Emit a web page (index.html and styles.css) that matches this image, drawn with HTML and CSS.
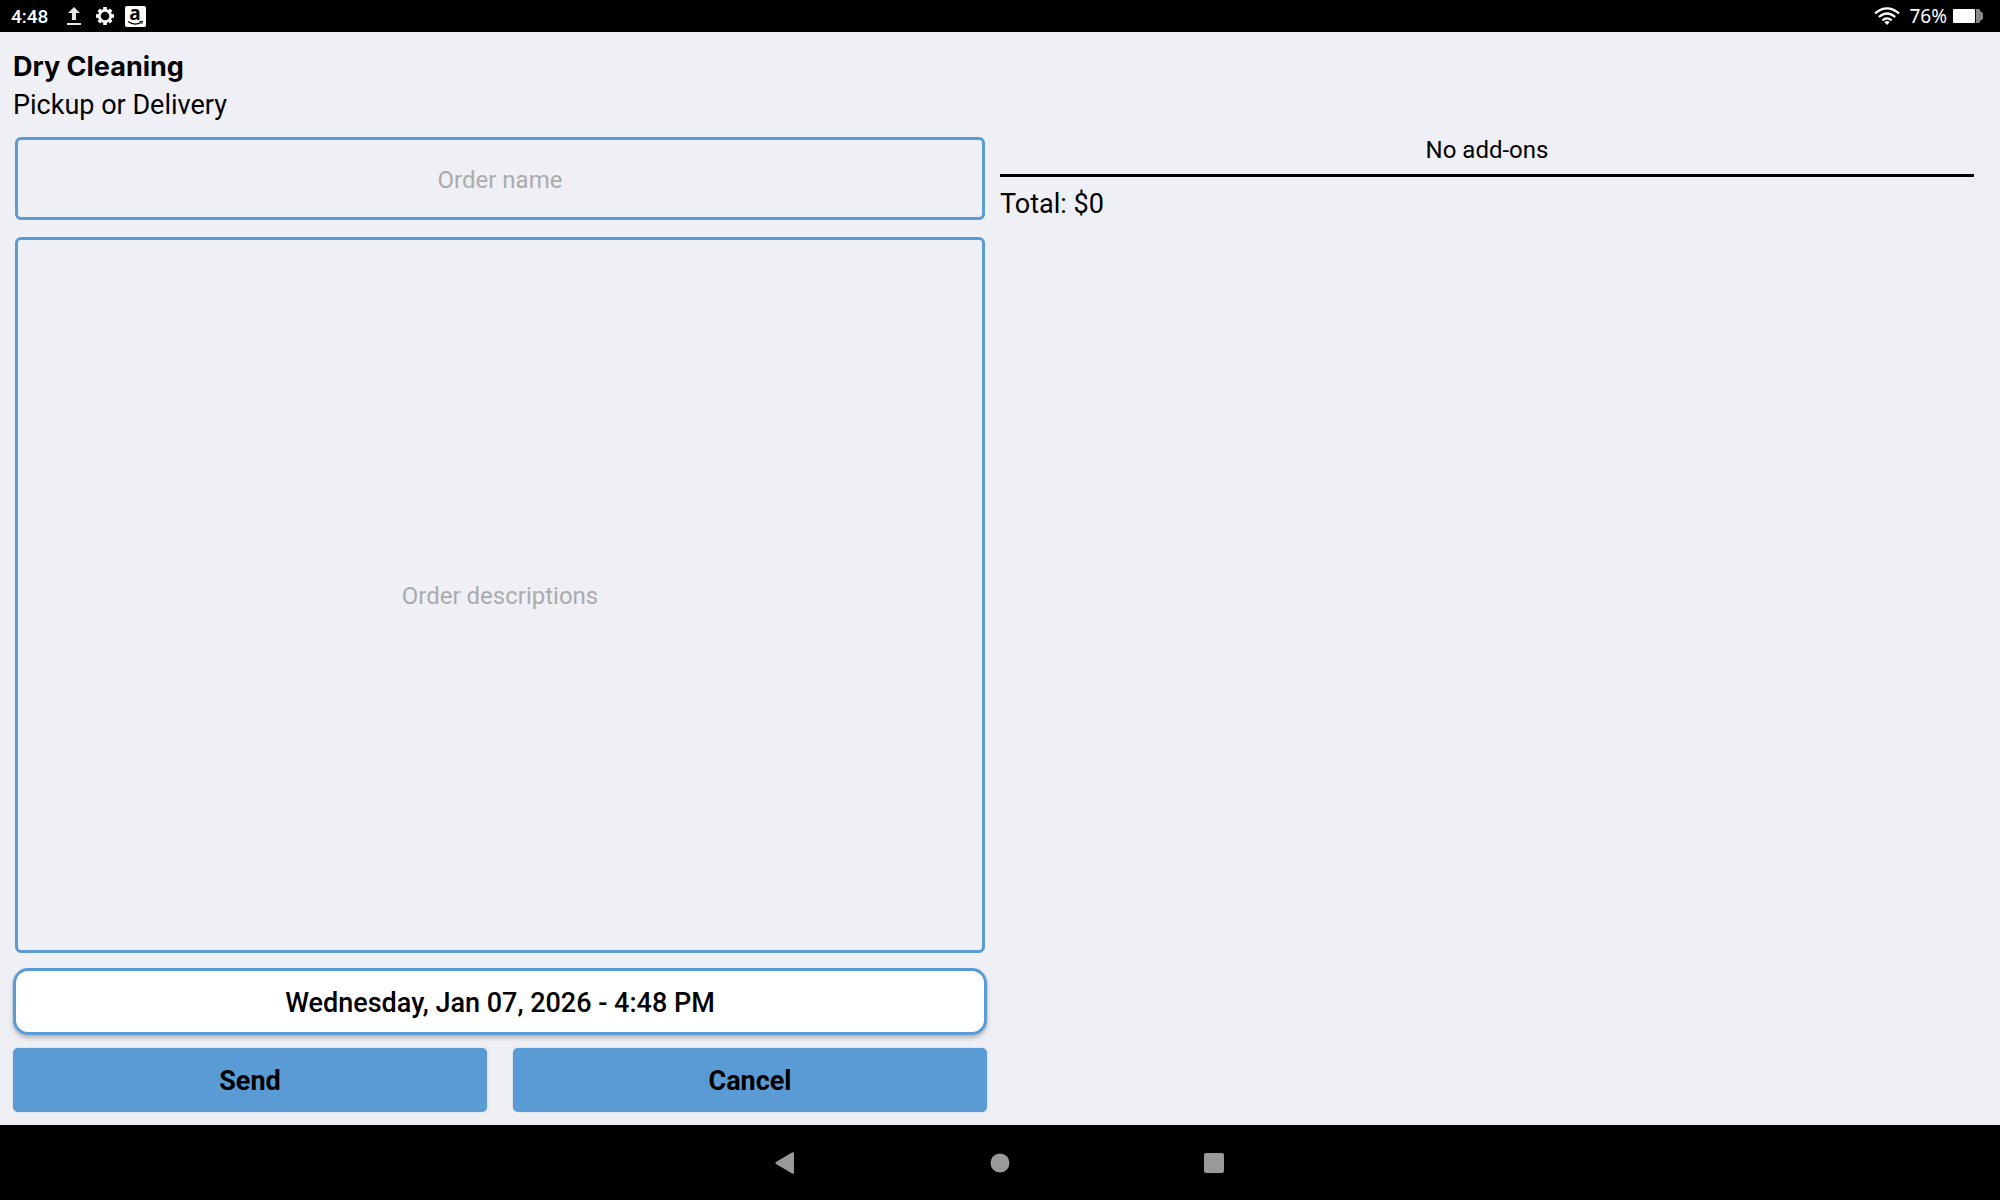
FILE: index.html
```html
<!DOCTYPE html>
<html lang="en">
<head>
    <meta charset="UTF-8">
    <meta name="viewport" content="width=device-width, initial-scale=1.0">
    <title>Dry Cleaning</title>
    <link rel="stylesheet" href="styles.css">
</head>
<body>
    <div class="status-bar">
        <span class="clock">4:48</span>
        <svg class="icon-upload" width="16" height="20" viewBox="0 0 16 20">
            <path d="M8 1L14 7H10V14H6V7H2Z" fill="#e6e6e6"/>
            <rect x="1" y="17" width="14" height="2" fill="#e6e6e6"/>
        </svg>
        <svg class="icon-gear" width="18" height="18" viewBox="0 0 18 18">
            <circle cx="9" cy="9" r="5.7" fill="none" stroke="#fff" stroke-width="2.8"/>
            <g stroke="#fff" stroke-width="3.6">
                <path d="M9 0V3M9 15V18M0 9H3M15 9H18"/>
                <path d="M2.8 2.8L4.6 4.6M13.4 13.4L15.2 15.2M2.8 15.2L4.6 13.4M13.4 4.6L15.2 2.8"/>
            </g>
        </svg>
        <svg class="icon-store" width="21" height="21" viewBox="0 0 21 21">
            <rect width="21" height="21" rx="2" fill="#fff"/>
            <text x="10" y="14" text-anchor="middle" class="store-letter">a</text>
            <path d="M3 15.5Q9.5 20 16 16.5" fill="none" stroke="#000" stroke-width="1.2"/>
            <path d="M14.5 15.5L17.5 15.3L16.7 18" fill="none" stroke="#000" stroke-width="1"/>
        </svg>
        <svg class="icon-wifi" width="26" height="18" viewBox="0 0 26 18">
            <g fill="none" stroke="#fff" stroke-width="2.2">
                <path d="M1 6.3Q13 -3.7 25 6.3"/>
                <path d="M4.8 10Q13 3 21.2 10"/>
                <path d="M8.4 13.3Q13 9.3 17.6 13.3"/>
            </g>
            <path d="M10.3 15Q13 12.8 15.7 15L13 18Z" fill="#fff"/>
        </svg>
        <span class="battery-text">76%</span>
        <svg class="icon-battery" width="30" height="14" viewBox="0 0 30 14">
            <rect width="22" height="14" rx="1" fill="#fff"/>
            <path d="M23 0H26Q27 0 27 2L30 4V10L27 12Q27 14 26 14H23Z" fill="#888"/>
        </svg>
    </div>

    <main class="page">
        <header class="page-header">
            <h1>Dry Cleaning</h1>
            <p>Pickup or Delivery</p>
        </header>
        <div class="columns">
            <form class="order-form">
                <input type="text" class="field" name="orderName" placeholder="Order name" aria-label="Order name">
                <textarea class="field field-desc" name="orderDesc" placeholder="Order descriptions" aria-label="Order descriptions"></textarea>
                <button type="button" class="date-button">Wednesday, Jan 07, 2026 - 4:48 PM</button>
                <div class="actions">
                    <button type="submit" class="action-button">Send</button>
                    <button type="button" class="action-button">Cancel</button>
                </div>
            </form>
            <section class="summary">
                <p class="addons">No add-ons</p>
                <p class="total">Total: $0</p>
            </section>
        </div>
    </main>

    <nav class="nav-bar">
        <button type="button" class="nav-button" aria-label="Back">
            <svg width="30" height="24" viewBox="0 0 30 24"><path d="M21 1.5Q23 0.8 23 2.5V21.5Q23 23.2 21 22.5L5 13Q3.5 12 5 11Z" fill="#999"/></svg>
        </button>
        <button type="button" class="nav-button" aria-label="Home">
            <svg width="24" height="24" viewBox="0 0 24 24"><circle cx="12" cy="12" r="9.5" fill="#999"/></svg>
        </button>
        <button type="button" class="nav-button" aria-label="Recent apps">
            <svg width="24" height="24" viewBox="0 0 24 24"><rect x="2" y="2" width="20" height="20" rx="2" fill="#999"/></svg>
        </button>
    </nav>
</body>
</html>
```
FILE: styles.css
```css
* {
    box-sizing: border-box;
}
body {
    margin: 0;
    min-height: 100vh;
    display: flex;
    flex-direction: column;
    font-family: Roboto, sans-serif;
    color: #000;
    background: #eff0f5;
}
h1,
p {
    margin: 0;
}
button {
    font-family: inherit;
    color: #000;
    cursor: pointer;
}
.status-bar {
    display: flex;
    align-items: center;
    height: 32px;
    padding: 0 17px 0 11px;
    background: #000;
    color: #fff;
}
.clock {
    font-size: 19px;
    font-weight: 500;
}
.icon-upload {
    margin-left: 18px;
}
.icon-gear {
    margin-left: 14px;
}
.icon-store {
    margin-left: 11px;
    overflow: visible;
}
.store-letter {
    font: bold 19px "Noto Sans", sans-serif;
}
.icon-wifi {
    margin-left: auto;
}
.battery-text {
    margin: 0 6px 0 9px;
    font-family: "Noto Sans", sans-serif;
    font-size: 19px;
    line-height: 24px;
}
.page {
    flex: 1;
    display: flex;
    flex-direction: column;
    padding: 13px 26px 13px 13px;
}
.page-header {
    line-height: 38px;
    height: 92px;
    padding-top: 3px;
}
h1 {
    font-family: Inter, sans-serif;
    font-size: 27px;
    font-weight: 700;
}
.page-header p,
.total {
    font-size: 27px;
}
.columns {
    flex: 1;
    display: grid;
    grid-template-columns: 1fr 1fr;
    gap: 13px;
}
.order-form {
    display: flex;
    flex-direction: column;
}
.field {
    height: 83px;
    margin: 0 2px 17px;
    padding: 2px 16px 0;
    font-family: inherit;
    font-size: 24px;
    text-align: center;
    color: #000;
    background: transparent;
    border: 3px solid #5b9bd5;
    border-radius: 6px;
}
.field::placeholder {
    color: #aaabad;
}
.field-desc {
    flex: 1;
    margin-bottom: 15px;
    resize: none;
    align-content: center;
}
.date-button {
    height: 67px;
    padding: 2px 16px 0;
    font-size: 27px;
    font-weight: 500;
    background: #fff;
    border: 3px solid #5b9bd5;
    border-radius: 15px;
    box-shadow: 0 3px 4px rgba(0, 0, 0, 0.25);
}
.actions {
    display: grid;
    grid-template-columns: 1fr 1fr;
    gap: 26px;
    margin-top: 13px;
}
.action-button {
    height: 64px;
    padding: 2px 16px 0;
    font-size: 27px;
    font-weight: 700;
    background: #5b9bd5;
    border: none;
    border-radius: 5px;
    box-shadow: 0 0 2px rgba(0, 0, 0, 0.2);
}
.addons {
    height: 40px;
    line-height: 26px;
    font-size: 24px;
    text-align: center;
    border-bottom: 3px solid #000;
}
.total {
    margin-top: 10px;
    line-height: 34px;
}
.nav-bar {
    display: flex;
    justify-content: center;
    height: 75px;
    background: #000;
}
.nav-button {
    display: flex;
    align-items: center;
    justify-content: center;
    width: 214px;
    padding: 0;
    background: none;
    border: none;
}
```
